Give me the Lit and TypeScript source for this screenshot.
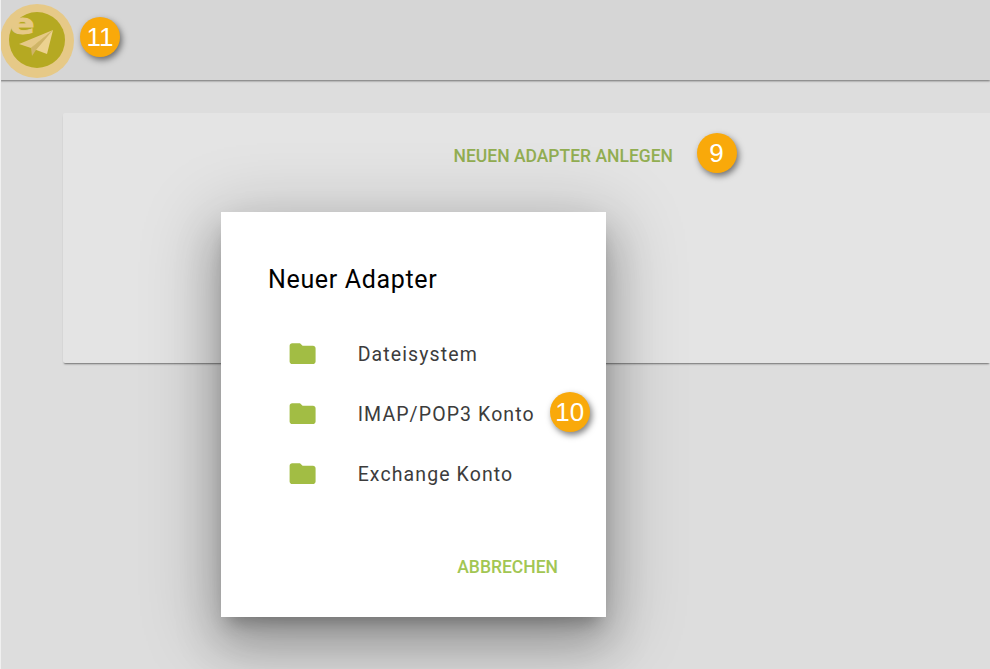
import { LitElement, html, css } from "lit";
import { customElement } from "lit/decorators.js";

const folder = html`<svg class="folder" viewBox="0 0 24 24"><path d="M10 4H4c-1.1 0-1.99.9-1.99 2L2 18c0 1.1.9 2 2 2h16c1.1 0 2-.9 2-2V8c0-1.1-.9-2-2-2h-8l-2-2z"/></svg>`;

@customElement("app-root")
export class AppRoot extends LitElement {
  static styles = css`
    :host {
      display: block;
      position: relative;
      width: 990px;
      height: 669px;
      overflow: hidden;
      background: #dddddd;
      font-family: Roboto, "Liberation Sans", sans-serif;
    }
    .edge {
      position: absolute;
      left: 0;
      top: 0;
      bottom: 0;
      width: 1px;
      background: #f0f0f0;
      z-index: 5;
    }
    header {
      height: 80px;
      box-sizing: border-box;
      background: #d6d6d6;
      box-shadow: 0 1px 2px rgba(0, 0, 0, 0.5);
      display: flex;
      align-items: flex-start;
      position: relative;
    }
    .logo {
      width: 74px;
      height: 80px;
      flex: none;
      margin-right: 6px;
    }
    .logo text {
      font-family: "DejaVu Sans", sans-serif;
      font-weight: 700;
      font-size: 28px;
      fill: #e6c987;
      stroke: #e6c987;
      stroke-width: 0.8px;
    }
    .badge {
      width: 40px;
      height: 40px;
      border-radius: 50%;
      background: #f9a90a;
      color: #fff;
      font-family: "Liberation Sans", Arial, sans-serif;
      font-size: 26px;
      line-height: 40px;
      text-align: center;
      box-shadow: 2px 3px 6px rgba(0, 0, 0, 0.5);
      flex: none;
    }
    .b11 {
      margin-top: 17px;
    }
    main {
      padding: 33px 0 0 63px;
    }
    .card {
      height: 250px;
      box-sizing: border-box;
      background: #e4e4e4;
      border-radius: 2px 0 0 2px;
      box-shadow: 0 2px 2px -1px rgba(0, 0, 0, 0.5);
      padding: 20px 0 0 390.5px;
      display: flex;
      align-items: flex-start;
      gap: 23.5px;
    }
    .action {
      font-size: 17.5px;
      font-weight: 500;
      line-height: 44px;
      margin-top: 1px;
      color: #92ae52;
    }
    .dialog {
      position: absolute;
      left: 221px;
      top: 212px;
      width: 385px;
      height: 405px;
      box-sizing: border-box;
      background: #fff;
      padding: 52px 48px 0 47px;
      display: flex;
      flex-direction: column;
      box-shadow: 0 12px 16px -7px rgba(0, 0, 0, 0.26),
        0 26px 42px 3px rgba(0, 0, 0, 0.2), 0 14px 70px 10px rgba(0, 0, 0, 0.2);
      z-index: 2;
    }
    h2 {
      margin: 0;
      font-size: 25px;
      font-weight: 400;
      line-height: 32px;
      color: #000;
      letter-spacing: 0.66px;
    }
    .list {
      margin-top: 28px;
      display: flex;
      flex-direction: column;
    }
    .row {
      height: 60px;
      display: flex;
      align-items: center;
      color: #3c3c3c;
      font-size: 19.5px;
      letter-spacing: 1.1px;
      white-space: nowrap;
      margin-left: 19px;
    }
    .folder {
      width: 31.2px;
      height: 31.2px;
      fill: #a2bd44;
      margin-right: 39.5px;
      flex: none;
    }
    .row .badge {
      margin-left: 15px;
      margin-bottom: 4px;
      letter-spacing: 0;
    }
    .cancel {
      margin-top: auto;
      margin-bottom: 28px;
      align-self: flex-end;
      font-size: 17.5px;
      font-weight: 500;
      line-height: 44px;
      color: #a2c653;
    }
  `;

  render() {
    return html`
      <div class="edge"></div>
      <header>
        <svg class="logo" viewBox="0 0 74 80">
          <circle cx="37" cy="41" r="37" fill="#e6c987" />
          <circle cx="37" cy="40" r="28" fill="#b5a922" />
          <text transform="translate(10 34) scale(1.3 1)">e</text>
          <polygon points="53,30 19,44 31,48" fill="#e6c987" />
          <polygon points="53,30 31,48 47,54" fill="#ecd290" />
          <polygon points="53,30 31,48 32,56 36,50" fill="#cfb468" />
        </svg>
        <div class="badge b11">11</div>
      </header>
      <main>
        <div class="card">
          <span class="action">NEUEN ADAPTER ANLEGEN</span>
          <div class="badge">9</div>
        </div>
      </main>
      <section class="dialog">
        <h2>Neuer Adapter</h2>
        <div class="list">
          <div class="row">${folder}Dateisystem</div>
          <div class="row">${folder}IMAP/POP3 Konto<div class="badge">10</div></div>
          <div class="row">${folder}Exchange Konto</div>
        </div>
        <span class="cancel">ABBRECHEN</span>
      </section>
    `;
  }
}
